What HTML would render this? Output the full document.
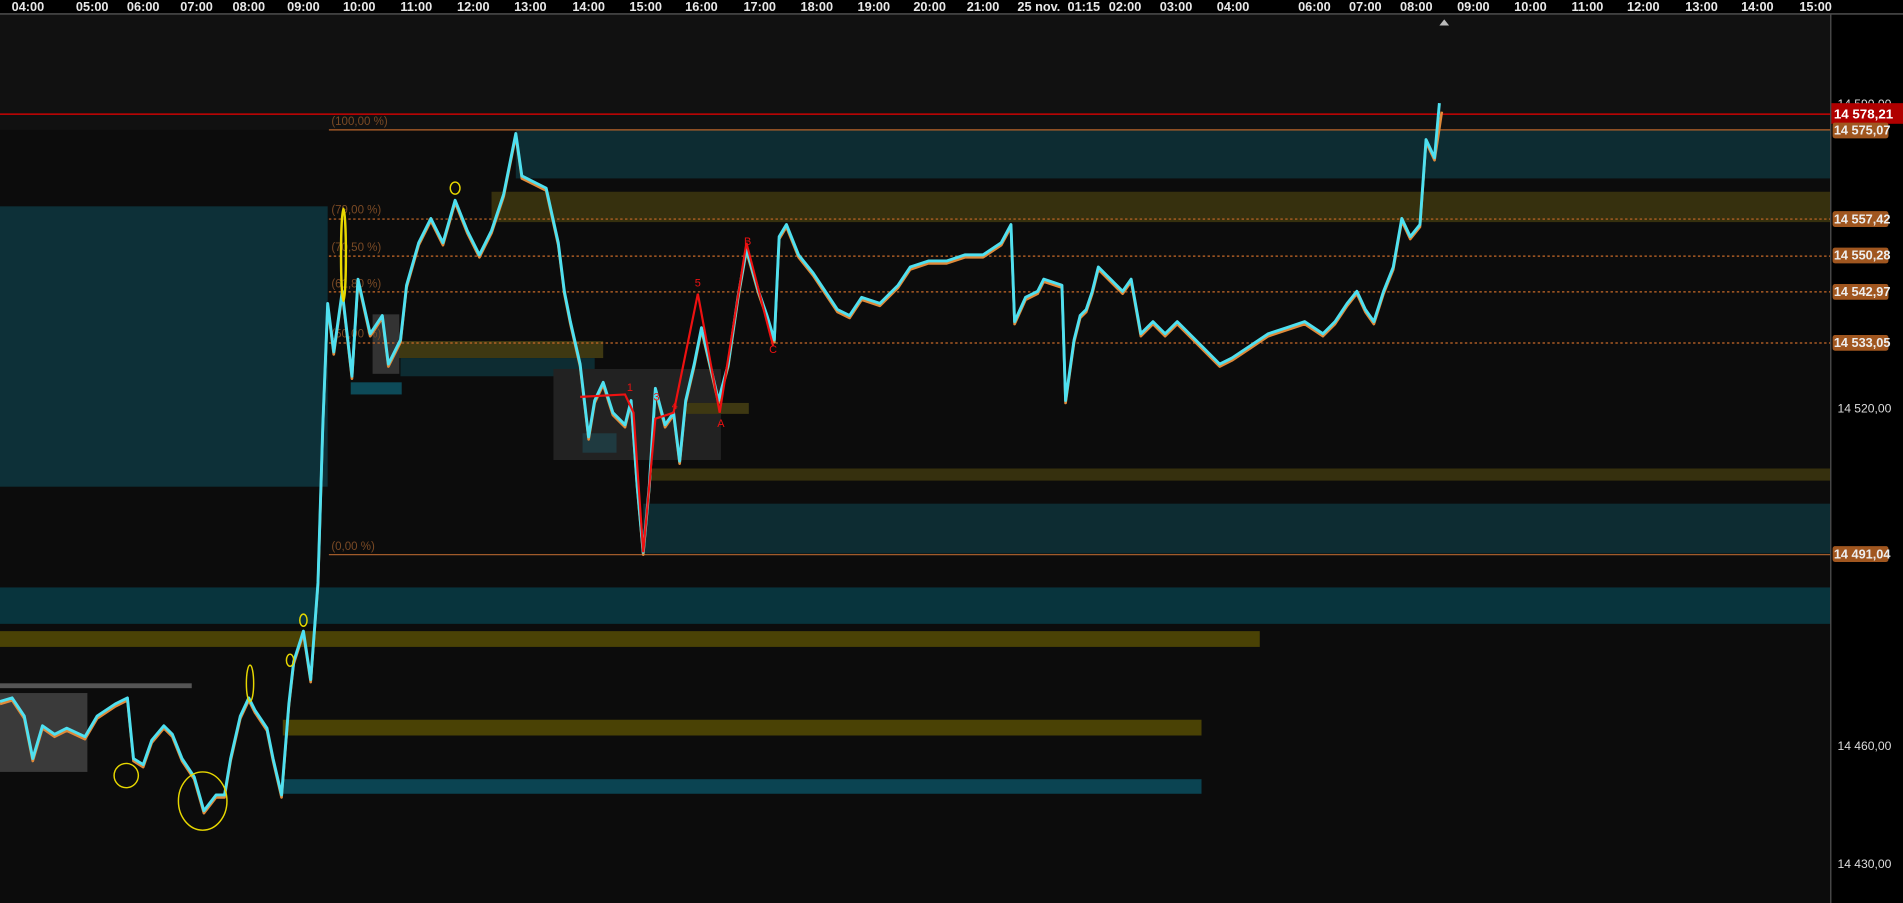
<!DOCTYPE html>
<html><head><meta charset="utf-8"><style>
html,body{margin:0;padding:0;background:#000;overflow:hidden}
svg{display:block}
text{font-family:"Liberation Sans",sans-serif}
</style></head><body>
<svg width="1903" height="903" viewBox="0 0 1568 744" preserveAspectRatio="none" xmlns="http://www.w3.org/2000/svg">
<rect x="0" y="0" width="1568" height="744" fill="#000"/>
<rect x="0" y="12" width="1508" height="732" fill="#0c0c0c"/>
<rect x="0" y="12" width="1508" height="95" fill="#111"/>
<line x1="0" y1="11.5" x2="1568" y2="11.5" stroke="#555" stroke-width="1.2"/>
<g fill="#e8e8e8" font-size="10.5" font-weight="bold" text-anchor="middle">
<text x="23" y="9">04:00</text><text x="76" y="9">05:00</text><text x="118" y="9">06:00</text><text x="162" y="9">07:00</text><text x="205" y="9">08:00</text><text x="250" y="9">09:00</text><text x="296" y="9">10:00</text><text x="343" y="9">11:00</text><text x="390" y="9">12:00</text><text x="437" y="9">13:00</text><text x="485" y="9">14:00</text><text x="532" y="9">15:00</text><text x="578" y="9">16:00</text><text x="626" y="9">17:00</text><text x="673" y="9">18:00</text><text x="720" y="9">19:00</text><text x="766" y="9">20:00</text><text x="810" y="9">21:00</text><text x="856" y="9">25 nov.</text><text x="893" y="9">01:15</text><text x="927" y="9">02:00</text><text x="969" y="9">03:00</text><text x="1016" y="9">04:00</text><text x="1083" y="9">06:00</text><text x="1125" y="9">07:00</text><text x="1167" y="9">08:00</text><text x="1214" y="9">09:00</text><text x="1261" y="9">10:00</text><text x="1308" y="9">11:00</text><text x="1354" y="9">12:00</text><text x="1402" y="9">13:00</text><text x="1448" y="9">14:00</text><text x="1496" y="9">15:00</text>
</g>
<path d="M1186 21 L1190 16 L1194 21 Z" fill="#bbb"/>
<rect x="0" y="170" width="270" height="231" fill="#0d3038"/>
<rect x="425" y="107" width="1083" height="40" fill="#0d2c32"/>
<rect x="405" y="158" width="1103" height="25" fill="#36300e"/>
<rect x="308" y="281" width="189" height="14" fill="#3e3812"/>
<rect x="330" y="295" width="160" height="15" fill="#0d2c32"/>
<rect x="289" y="315" width="42" height="10" fill="#0d4a58"/>
<rect x="456" y="304" width="138" height="75" fill="#222"/>
<rect x="480" y="357" width="28" height="16" fill="#1f3a40"/>
<rect x="307" y="259" width="22" height="49" fill="#333"/>
<rect x="565" y="332" width="52" height="9" fill="#3e3812"/>
<rect x="535" y="386" width="973" height="10" fill="#36300e"/>
<rect x="530" y="415" width="978" height="41" fill="#0d2c32"/>
<rect x="0" y="484" width="1508" height="30" fill="#08343d"/>
<rect x="0" y="520" width="1038" height="13" fill="#4a4205"/>
<rect x="0" y="563" width="158" height="4" fill="#555"/>
<rect x="0" y="571" width="72" height="65" fill="#3a3a3a"/>
<rect x="233" y="593" width="757" height="13" fill="#4a4205"/>
<rect x="233" y="642" width="757" height="12" fill="#0b4452"/>
<line x1="0" y1="94" x2="1508" y2="94" stroke="#e00" stroke-width="1"/>
<line x1="271" y1="107" x2="1508" y2="107" stroke="#b8642a" stroke-width="1"/>
<line x1="271" y1="457" x2="1508" y2="457" stroke="#a05a2a" stroke-width="1"/>
<g stroke="#c86a28" stroke-width="1" stroke-dasharray="2,2">
<line x1="271" y1="180.5" x2="1508" y2="180.5"/><line x1="271" y1="211" x2="1508" y2="211"/><line x1="271" y1="240.5" x2="1508" y2="240.5"/><line x1="271" y1="282.6" x2="1508" y2="282.6"/>
</g>
<g fill="#7a4a25" font-size="9.5">
<text x="273" y="103">(100,00 %)</text><text x="273" y="176">(79,00 %)</text><text x="273" y="207">(70,50 %)</text><text x="273" y="237">(61,80 %)</text><text x="273" y="278">(50,00 %)</text><text x="273" y="453">(0,00 %)</text>
</g>
<g fill="none" stroke-linejoin="round">
<polyline stroke="#e08a3a" stroke-width="2.2" points="0,580 10,577 20,592 27,627 35,600 45,607 55,602 70,609 80,592 95,582 105,577 110,627 118,632 125,612 135,600 142,607 150,627 160,642 168,670 178,657 185,657 190,627 198,592 205,577 210,587 220,602 225,627 232,657 238,582 242,547 250,522 256,562 262,482 266,352 270,252 275,292 282,242 290,312 295,232 305,277 315,262 320,302 330,282 335,237 345,202 355,182 365,202 375,167 385,192 395,212 405,192 415,162 425,112 430,147 440,152 450,157 460,202 465,242 470,267 478,302 485,362 490,332 497,317 505,342 515,352 520,332 525,402 530,457 535,402 540,322 548,352 555,342 560,382 565,332 572,302 578,272 585,302 592,332 600,302 608,247 615,207 625,242 632,262 638,282 642,197 648,187 658,212 670,227 680,242 690,257 700,262 710,247 725,252 740,237 750,222 765,217 780,217 795,212 810,212 825,202 833,187 836,267 845,247 855,242 860,232 875,237 878,332 885,282 890,262 895,257 900,242 905,222 915,232 925,242 932,232 940,277 950,267 960,277 970,267 980,277 990,287 1005,302 1015,297 1030,287 1045,277 1060,272 1075,267 1090,277 1100,267 1110,252 1118,242 1125,257 1132,267 1140,242 1148,222 1155,182 1162,197 1170,187 1175,117 1182,132 1188,92"/>
<polyline stroke="#4fe0f0" stroke-width="2.4" points="0,578 10,575 20,590 27,625 35,598 45,605 55,600 70,607 80,590 95,580 105,575 110,625 118,630 125,610 135,598 142,605 150,625 160,640 168,668 178,655 185,655 190,625 198,590 205,575 210,585 220,600 225,625 232,655 238,580 242,545 250,520 256,560 262,480 266,350 270,250 275,290 282,240 290,310 295,230 305,275 315,260 320,300 330,280 335,235 345,200 355,180 365,200 375,165 385,190 395,210 405,190 415,160 425,110 430,145 440,150 450,155 460,200 465,240 470,265 478,300 485,360 490,330 497,315 505,340 515,350 520,330 525,400 530,455 535,400 540,320 548,350 555,340 560,380 565,330 572,300 578,270 585,300 592,330 600,300 608,245 615,205 625,240 632,260 638,280 642,195 648,185 658,210 670,225 680,240 690,255 700,260 710,245 725,250 740,235 750,220 765,215 780,215 795,210 810,210 825,200 833,185 836,265 845,245 855,240 860,230 875,235 878,330 885,280 890,260 895,255 900,240 905,220 915,230 925,240 932,230 940,275 950,265 960,275 970,265 980,275 990,285 1005,300 1015,295 1030,285 1045,275 1060,270 1075,265 1090,275 1100,265 1110,250 1118,240 1125,255 1132,265 1140,240 1148,220 1155,180 1162,195 1170,185 1175,115 1182,130 1186,85"/>
</g>
<polyline fill="none" stroke="#ee1111" stroke-width="1.8" points="478,327 515,325 522,340 530,455 540,345 555,340 575,242 593,340 615,200 637,285"/>
<g fill="#ee1111" font-size="9" text-anchor="middle">
<text x="575" y="236">5</text><text x="616" y="202">B</text><text x="637" y="291">C</text><text x="594" y="352">A</text><text x="519" y="322">1</text><text x="541" y="330">3</text><text x="556" y="337">4</text>
</g>
<g fill="none" stroke="#e8d800" stroke-width="1.2">
<circle cx="104" cy="639" r="10"/>
<ellipse cx="167" cy="660" rx="20" ry="24"/>
<ellipse cx="375" cy="155" rx="4" ry="5"/>
<ellipse cx="250" cy="511" rx="3" ry="5"/>
<ellipse cx="239" cy="544" rx="3" ry="5"/>
<ellipse cx="206" cy="563" rx="3" ry="15"/>
<ellipse cx="283" cy="210" rx="2" ry="38" stroke-width="2"/>
</g>
<line x1="1508.5" y1="12" x2="1508.5" y2="744" stroke="#555" stroke-width="1"/>
<g fill="#ddd" font-size="10">
<text x="1514" y="89">14 590,00</text><text x="1514" y="340">14 520,00</text><text x="1514" y="618">14 460,00</text><text x="1514" y="715">14 430,00</text>
</g>
<rect x="1509" y="85" width="59" height="17" fill="#b00000"/>
<text x="1511" y="97.5" fill="#fff" font-size="11" font-weight="bold">14 578,21</text>
<g fill="#a0561f">
<rect x="1510" y="101" width="46" height="13" rx="2"/><rect x="1510" y="174" width="46" height="13" rx="2"/><rect x="1510" y="204" width="46" height="13" rx="2"/><rect x="1510" y="234" width="46" height="13" rx="2"/><rect x="1510" y="276" width="46" height="13" rx="2"/><rect x="1510" y="450" width="46" height="13" rx="2"/>
</g>
<g fill="#eee" font-size="10.5" font-weight="bold">
<text x="1511" y="111">14 575,07</text><text x="1511" y="184">14 557,42</text><text x="1511" y="214">14 550,28</text><text x="1511" y="244">14 542,97</text><text x="1511" y="286">14 533,05</text><text x="1511" y="460">14 491,04</text>
</g>
</svg>
</body></html>
